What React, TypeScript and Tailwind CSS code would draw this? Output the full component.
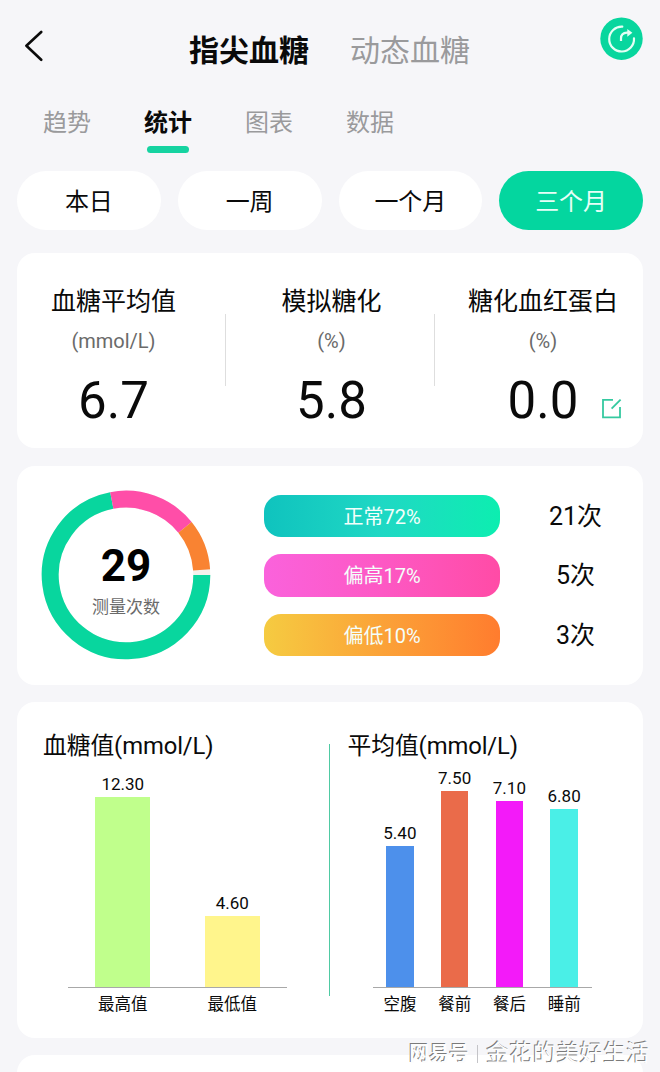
import { clsx } from 'clsx';

const TABS = ['趋势', '统计', '图表', '数据'];
const RANGES = ['本日', '一周', '一个月', '三个月'];

const LEVELS = [
  { label: '正常72%', count: '21次', fill: 'from-[#0fc3be] via-[#1fd8c4] to-[#0ceeb0]' },
  { label: '偏高17%', count: '5次', fill: 'from-[#fa62dc] via-[#fd58c4] to-[#ff4ba6]' },
  { label: '偏低10%', count: '3次', fill: 'from-[#f5cb41] via-[#fba238] to-[#ff7c2e]' },
];

interface Bar {
  label: string;
  value: number;
  color: string;
}

const EXTREMES: Bar[] = [
  { label: '最高值', value: 12.3, color: 'bg-[#c0ff8c]' },
  { label: '最低值', value: 4.6, color: 'bg-[#fff58c]' },
];

const AVERAGES: Bar[] = [
  { label: '空腹', value: 5.4, color: 'bg-[#4d90eb]' },
  { label: '餐前', value: 7.5, color: 'bg-[#ea6b4a]' },
  { label: '餐后', value: 7.1, color: 'bg-[#f31af9]' },
  { label: '睡前', value: 6.8, color: 'bg-[#4aefe7]' },
];

function Header() {
  return (
    <header className="flex h-[90px] items-start pl-[24px] pr-[17px]">
      <button type="button" className="mt-[30px]">
        <svg className="h-8 w-[19px]" viewBox="0 0 19 32" fill="none" stroke="#0b0b0b" strokeWidth={2.6} strokeLinecap="round" strokeLinejoin="round">
          <path d="M17.2 2L2.4 15.7L17.2 29.8" />
        </svg>
      </button>
      <div className="ml-[146px] mt-[29px] flex gap-[41px] text-[30px] leading-[44px]">
        <h1 className="font-bold text-[#0a0a0a]">指尖血糖</h1>
        <span className="text-[#9a9a9c]">动态血糖</span>
      </div>
      <button type="button" className="ml-auto mt-[17px]">
        <svg className="h-[43px] w-[43px]" viewBox="0 0 43 43" fill="none" stroke="#e4fff5" strokeWidth={2.2}>
          <circle cx="21.5" cy="21.7" r="21.2" fill="#08d69e" stroke="none" />
          <path d="M22.3 9.7A12.4 12.4 0 1 0 34 21.3" strokeLinecap="round" />
          <path d="M21 24V21.5Q21 16 27 15.7H29" />
          <path d="M27.3 12L32.4 15.7L27.3 19.7Z" fill="#e4fff5" stroke="none" />
        </svg>
      </button>
    </header>
  );
}

function Tabs() {
  return (
    <nav className="flex h-[81px] gap-[53px] pl-[43px] pt-[15px] text-[24px] leading-[36px]">
      {TABS.map(tab => {
        const active = tab === '统计';
        return (
          <div key={tab} className="flex w-12 flex-col items-center">
            <span className={clsx('whitespace-nowrap', active ? 'font-bold text-[#0a0a0a]' : 'text-[#9a9a9c]')}>{tab}</span>
            {active && <span className="mt-[5px] h-[7px] w-[42px] rounded-full bg-[#16d3a1]" />}
          </div>
        );
      })}
    </nav>
  );
}

function RangePicker() {
  return (
    <div className="grid grid-cols-4 gap-[17px]">
      {RANGES.map(range => (
        <button
          key={range}
          type="button"
          className={clsx(
            'h-[59px] rounded-full pt-[3px] text-[24px]',
            range === '三个月' ? 'bg-[#04d69f] text-[#e6fff7]' : 'bg-white text-[#0a0a0a]',
          )}
        >
          {range}
        </button>
      ))}
    </div>
  );
}

function Metric({ title, unit, value, className }: { title: string; unit: string; value: string; className?: string }) {
  return (
    <div className={clsx('flex flex-col items-center whitespace-nowrap', className)}>
      <h2 className="text-[25px] leading-[36px]">{title}</h2>
      <p className="mt-[7px] text-[20px] leading-[28px] text-[#6a6a6a]">{unit}</p>
      <p className="mt-[16px] text-[51px] leading-[60px]">{value}</p>
    </div>
  );
}

function Summary() {
  return (
    <section className="relative mt-[23px] flex h-[195px] rounded-[18px] bg-white pt-[31px]">
      <Metric className="w-[208px] pr-[15px]" title="血糖平均值" unit="(mmol/L)" value="6.7" />
      <div className="mt-[30px] h-[72px] w-px bg-[#dedede]" />
      <Metric className="w-[208px] pl-[3px]" title="模拟糖化" unit="(%)" value="5.8" />
      <div className="mt-[30px] h-[72px] w-px bg-[#dedede]" />
      <Metric className="w-[208px] pl-[8px]" title="糖化血红蛋白" unit="(%)" value="0.0" />
      <button type="button" className="absolute right-[21px] bottom-[29px]">
        <svg className="h-[21px] w-[21px]" viewBox="0 0 21 21" fill="none" stroke="#35c9a0" strokeWidth={1.8}>
          <path d="M12 1.9H2V19.3H19V9" />
          <path d="M19.6 1.6L10.6 10.6" />
        </svg>
      </button>
    </section>
  );
}

function Donut() {
  // normal fills the ring clockwise from 3 o'clock, then high, then low
  return (
    <div className="relative h-[170px] w-[170px] shrink-0">
      <svg className="h-full w-full" viewBox="-85 -85 170 170" fill="none" strokeWidth={17}>
        <circle r="75.8" stroke="#f3f1ec" />
        <path d="M75.8 0A75.8 75.8 0 1 1 -14.2 -74.5" stroke="#08d69e" />
        <path d="M-14.2 -74.5A75.8 75.8 0 0 1 59 -47.6" stroke="#ff4ea8" />
        <path d="M59 -47.6A75.8 75.8 0 0 1 75.6 -5.2" stroke="#f98332" />
      </svg>
      <div className="absolute inset-0 flex flex-col items-center pt-[50px]">
        <span className="text-[44px] leading-[52px] font-bold text-black">29</span>
        <span className="mt-[3px] text-[17px] leading-[24px] text-[#6a6a6a]">测量次数</span>
      </div>
    </div>
  );
}

function Distribution() {
  return (
    <section className="mt-[18px] flex h-[219px] items-start rounded-[18px] bg-white pt-[24px] pl-[24px]">
      <Donut />
      <ul className="mt-[5px] ml-[53px] flex flex-col gap-[17px]">
        {LEVELS.map(level => (
          <li key={level.label} className="flex items-center">
            <span className={clsx('flex h-[42.3px] w-[236px] items-center justify-center rounded-[17px] bg-linear-to-r pt-[2px] text-[20px] text-[#f4fffb]', level.fill)}>
              {level.label}
            </span>
            <span className="h-[36px] w-[143px] pt-px pl-[8px] text-center text-[25px] leading-[36px]">{level.count}</span>
          </li>
        ))}
      </ul>
    </section>
  );
}

function BarChart({ title, bars, scale, barWidth }: { title: string; bars: Bar[]; scale: number; barWidth: string }) {
  return (
    <div className="flex h-full flex-col">
      <h2 className="text-[23.8px] leading-[36px] tracking-[-0.1px] whitespace-nowrap">{title}</h2>
      <div className="ml-[25px] w-[219px]">
        <div className="flex h-[224px] items-end border-b border-[#a8a8a8]">
          {bars.map(bar => (
            <div key={bar.label} className="flex flex-1 flex-col items-center">
              <span className="mb-[3px] text-[17px] leading-[20px]">{bar.value.toFixed(2)}</span>
              <div className={clsx(barWidth, bar.color)} style={{ height: bar.value * scale }} />
            </div>
          ))}
        </div>
        <div className="mt-[5px] flex text-[16.5px] leading-[24px]">
          {bars.map(bar => (
            <span key={bar.label} className="flex-1 text-center">{bar.label}</span>
          ))}
        </div>
      </div>
    </div>
  );
}

function Charts() {
  return (
    <section className="mt-[17px] flex h-[336px] rounded-[18px] bg-white pt-[26px] pl-[26px]">
      <BarChart title="血糖值(mmol/L)" bars={EXTREMES} scale={15.45} barWidth="w-[55px]" />
      <div className="mt-[16px] mr-[17.5px] ml-[42px] h-[252px] w-px bg-[#4fcaa3]" />
      <BarChart title="平均值(mmol/L)" bars={AVERAGES} scale={26.2} barWidth="w-[27.5px]" />
    </section>
  );
}

function Watermark() {
  return (
    <div className="absolute right-[10px] bottom-0 flex items-center text-[23px] leading-[36px] whitespace-nowrap text-[#fdfdfd] [text-shadow:-1px_-1px_0.5px_#7a7a7a]">
      <span className="text-[20px] font-bold">网易号</span>
      <span className="mx-[8px] h-[18px] w-px bg-[#c4c4c8]" />
      <span className="tracking-[0.4px]">金花的美好生活</span>
    </div>
  );
}

export default function App() {
  return (
    <div className="relative h-[1072px] w-[660px] overflow-hidden bg-[#f6f6f9] font-['Roboto','Noto_Sans_CJK_SC',sans-serif] text-[#0a0a0a]">
      <Header />
      <Tabs />
      <main className="px-[17px]">
        <RangePicker />
        <Summary />
        <Distribution />
        <Charts />
        <section className="mt-[17px] h-[60px] rounded-[18px] bg-white" />
      </main>
      <Watermark />
    </div>
  );
}
